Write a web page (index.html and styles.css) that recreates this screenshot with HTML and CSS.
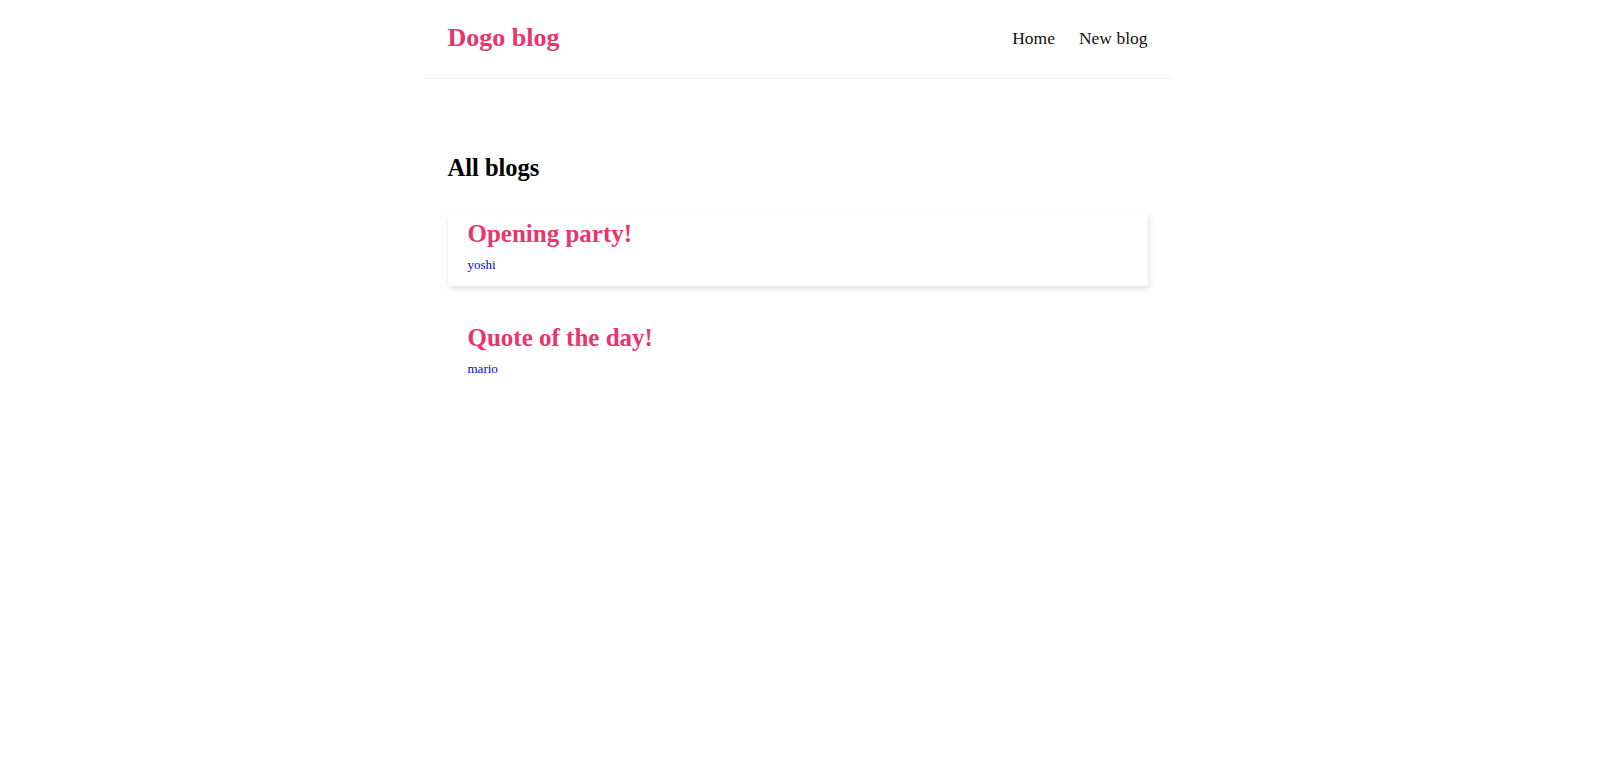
FILE: index.html
```html
<!DOCTYPE html>
<html lang="en">
<head>
<meta charset="utf-8">
<title>Dogo blog</title>
<link rel="stylesheet" href="styles.css">
</head>
<body>
<div class="app">
  <nav class="navbar">
    <h1 class="brand">Dogo blog</h1>
    <div class="links">
      <a href="#" class="nav-link">Home</a>
      <a href="#" class="nav-link">New blog</a>
    </div>
  </nav>
  <main class="content">
    <h2 class="page-title">All blogs</h2>
    <div class="blog-list">
      <div class="blog-preview is-hover">
        <h2 class="blog-title">Opening party!</h2>
        <a href="#" class="blog-author">yoshi</a>
      </div>
      <div class="blog-preview">
        <h2 class="blog-title">Quote of the day!</h2>
        <a href="#" class="blog-author">mario</a>
      </div>
    </div>
  </main>
</div>
</body>
</html>
```

FILE: styles.css
```css
* {
  margin: 0;
  box-sizing: border-box;
}

body {
  margin: 0;
  padding-right: 6px;
  font-family: "Liberation Serif", "Times New Roman", serif;
  background: #fff;
  color: #000;
}

.navbar {
  max-width: 748px;
  height: 79px;
  margin: 0 auto;
  padding: 0 24px 0 24px;
  display: flex;
  align-items: center;
  border-bottom: 1px solid #f2f2f2;
}

.brand {
  font-size: 26px;
  line-height: 30px;
  font-weight: bold;
  color: #e8356b;
  padding-bottom: 3px;
}

.links {
  margin-left: auto;
  display: flex;
  gap: 24px;
  padding-bottom: 2px;
}

.nav-link {
  font-size: 17.5px;
  line-height: 20px;
  color: #111;
  text-decoration: none;
}

.content {
  max-width: 700px;
  margin: 75px auto 0;
}

.page-title {
  font-size: 24.5px;
  line-height: 28px;
  font-weight: bold;
  color: #000;
}

.blog-list {
  display: flex;
  flex-direction: column;
  gap: 30px;
  margin-top: 30px;
}

.blog-preview {
  padding: 7px 20px 14px;
  display: flex;
  flex-direction: column;
  align-items: flex-start;
  gap: 8px;
}

.blog-preview.is-hover {
  box-shadow: 1px 3px 6px rgba(0, 0, 0, 0.12);
}

.blog-title {
  font-size: 25px;
  line-height: 30px;
  font-weight: bold;
  color: #e8356b;
}

.blog-author {
  font-size: 13px;
  line-height: 15px;
  color: #0000ee;
  text-decoration: none;
}
```
